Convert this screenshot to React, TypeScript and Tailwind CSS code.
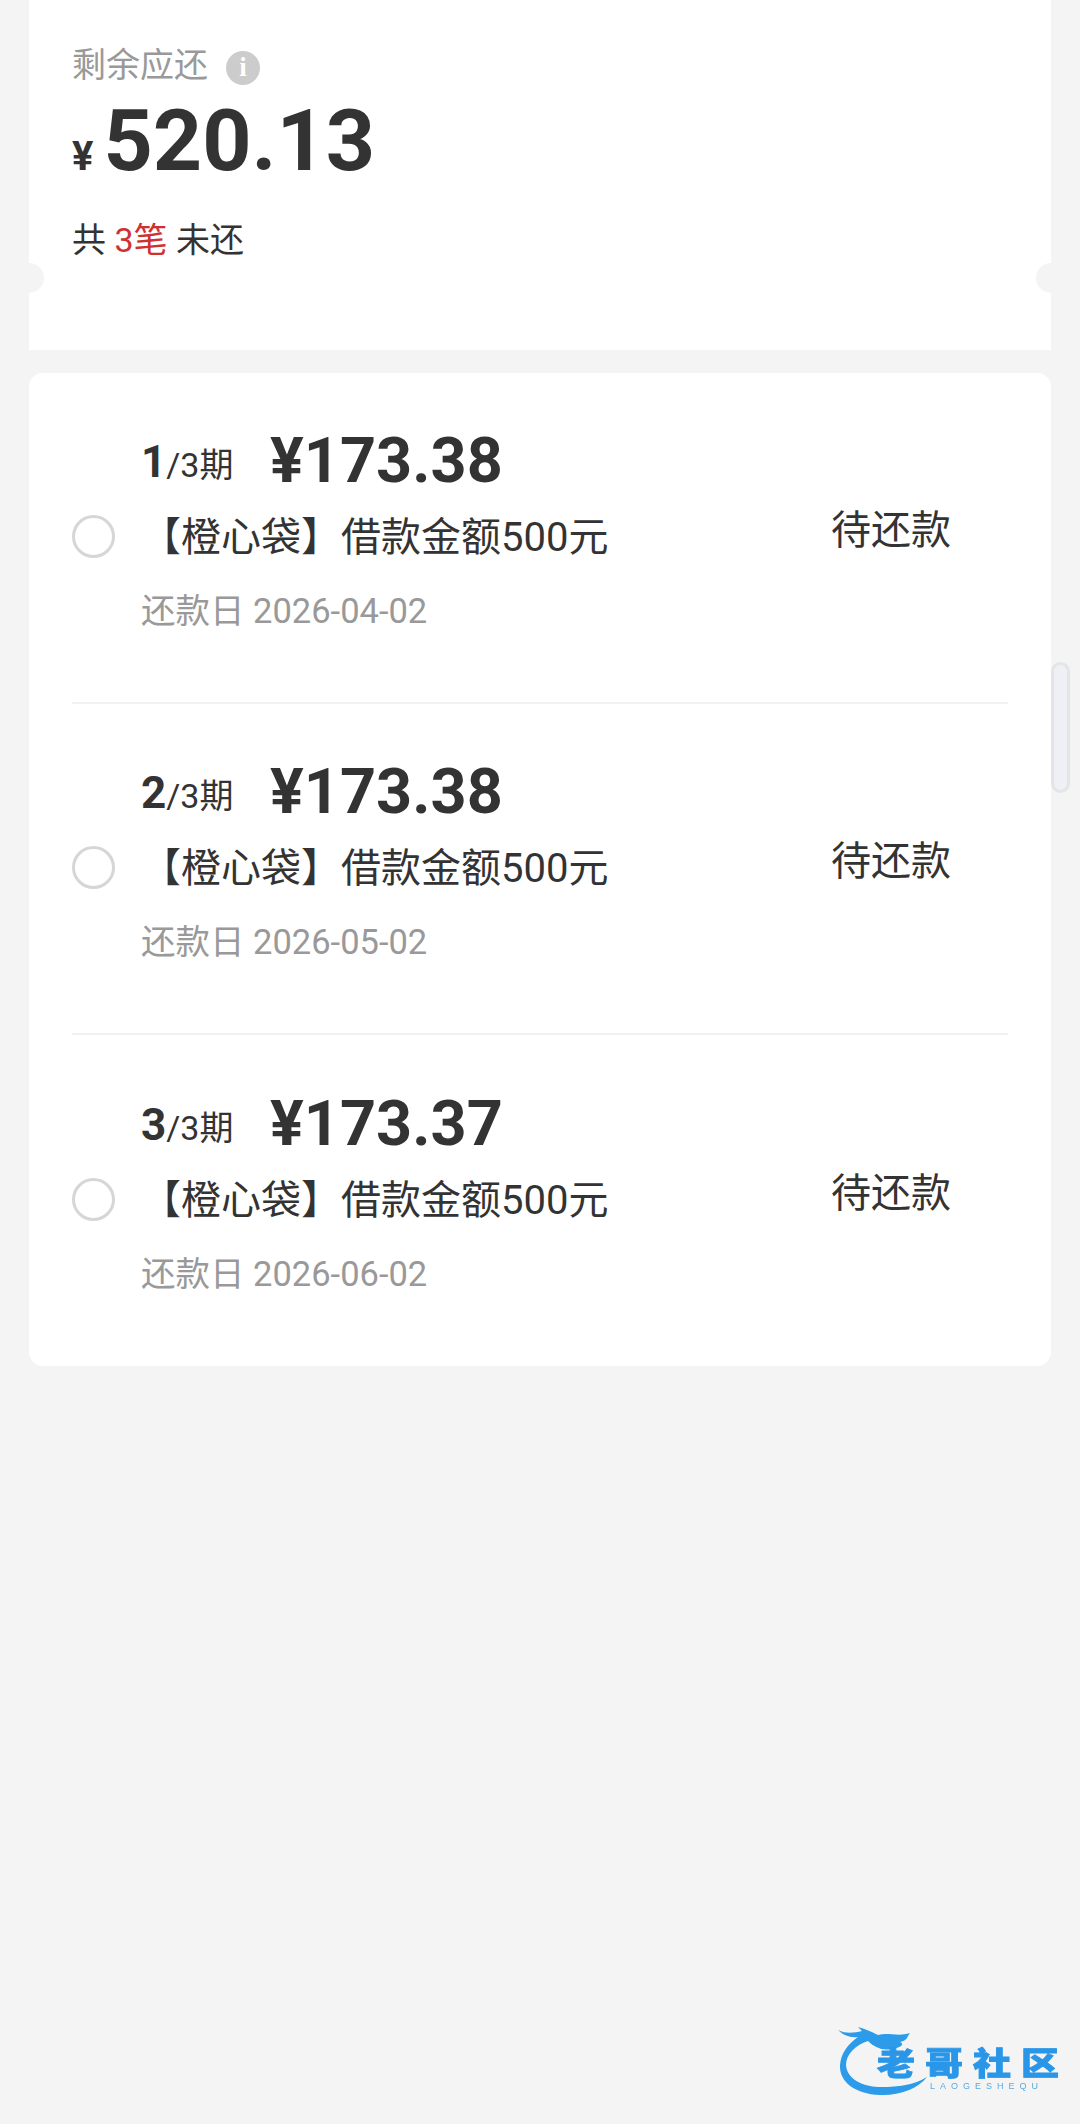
const fontStack = "font-['Roboto','Noto_Sans_CJK_SC',sans-serif]"

type Installment = {
  index: number
  amount: string
  dueDate: string
}

const installments: Installment[] = [
  { index: 1, amount: '173.38', dueDate: '2026-04-02' },
  { index: 2, amount: '173.38', dueDate: '2026-05-02' },
  { index: 3, amount: '173.37', dueDate: '2026-06-02' },
]

function InstallmentRow({ item, last }: { item: Installment; last: boolean }) {
  return (
    <div className={`flex h-[331px] items-center ${last ? '' : 'border-b-2 border-[#f1f1f1]'}`}>
      <div className="mb-[2px] h-[43px] w-[43px] shrink-0 rounded-full border-[3px] border-[#d6d6d6] bg-white" />
      <div className="ml-[26px] flex-1 pb-[4px]">
        <div className="flex h-[76px] items-center text-[#333]">
          <span className="w-[129px] whitespace-nowrap">
            <span className="text-[44px] font-bold">{item.index}</span>
            <span className="text-[34px]">/3期</span>
          </span>
          <span className="text-[63px] font-bold">¥{item.amount}</span>
        </div>
        <div className="flex h-[76px] items-center whitespace-nowrap text-[40px] text-[#333]">
          【橙心袋】借款金额500元
        </div>
        <div className="flex h-[72px] items-center whitespace-nowrap text-[34.5px] text-[#999]">
          还款日 {item.dueDate}
        </div>
      </div>
      <div className="mb-[14px] w-[177px] shrink-0 text-[40px] text-[#333]">待还款</div>
    </div>
  )
}

function Logo() {
  return (
    <div className="absolute left-[838px] top-[2027px] h-[70px] w-[224px] blur-[0.7px]">
      <svg className="absolute left-0 top-0" width="120" height="70" viewBox="0 0 120 70">
        <path
          d="M0 3 C8 7 16 6 24 4 L20 0 C28 2 34 5 40 8 C50 5 60 10 72 6 C68 11 70 13 62 15 C68 18 60 21 54 22 C44 24 36 20 30 14 C17 18 8 28 8 38 C9 52 24 60 44 60 C60 60 76 58 89 50 C80 62 60 69 42 68 C16 67 1 54 2 38 C3 26 10 17 20 10 C12 11 5 8 0 3 Z"
          fill="#2b9bea"
        />
      </svg>
      <div className="absolute left-[39px] top-[21px] origin-top scale-y-[0.84] whitespace-nowrap font-['Noto_Sans_CJK_SC',sans-serif] text-[38px] leading-[32px] font-black tracking-[10px] text-[#2a96e8] [-webkit-text-stroke:1px_#2a96e8]">
        老哥社区
      </div>
      <div className="absolute left-[92px] top-[54px] whitespace-nowrap font-['Liberation_Sans',sans-serif] text-[9px] leading-[10px] tracking-[5px] text-[#5aa9e0]">
        LAOGESHEQU
      </div>
    </div>
  )
}

export default function App() {
  return (
    <div className={`relative h-[2124px] w-[1080px] overflow-hidden bg-[#f4f4f4] ${fontStack}`}>
      <div className="ml-[29px] w-[1022px]">
        <div className="relative h-[350px] bg-white pl-[43px] pt-[42px]">
          <div className="flex h-[46px] items-center text-[34px] text-[#999]">
            剩余应还
            <span className="ml-[18px] mt-[5px] flex h-[34px] w-[34px] items-center justify-center rounded-full bg-[#ccc] font-['Liberation_Serif',serif] text-[27px] font-bold text-white">
              i
            </span>
          </div>
          <div className="mt-[7px] flex h-[92px] items-baseline font-bold text-[#333]">
            <span className="text-[40px]">¥</span>
            <span className="ml-[10px] text-[86px] leading-[92px]">520.13</span>
          </div>
          <div className="mt-[30px] flex h-[46px] items-center whitespace-pre text-[34px] text-[#333]">
            共 <span className="text-[#cf3030]">3笔</span> 未还
          </div>
          <div className="absolute left-[-15px] top-[263px] h-[30px] w-[30px] rounded-full bg-[#f4f4f4]" />
          <div className="absolute right-[-15px] top-[263px] h-[30px] w-[30px] rounded-full bg-[#f4f4f4]" />
        </div>

        <div className="mt-[23px] rounded-[14px] bg-white pl-[43px] pr-[43px]">
          {installments.map((item, i) => (
            <InstallmentRow key={item.index} item={item} last={i === installments.length - 1} />
          ))}
        </div>
      </div>

      {/* overlay scrollbar */}
      <div className="absolute left-[1051px] top-[662px] h-[131px] w-[19px] rounded-full border-[3px] border-[#e4e5e8] bg-[#eef0f6]" />

      <Logo />
    </div>
  )
}
